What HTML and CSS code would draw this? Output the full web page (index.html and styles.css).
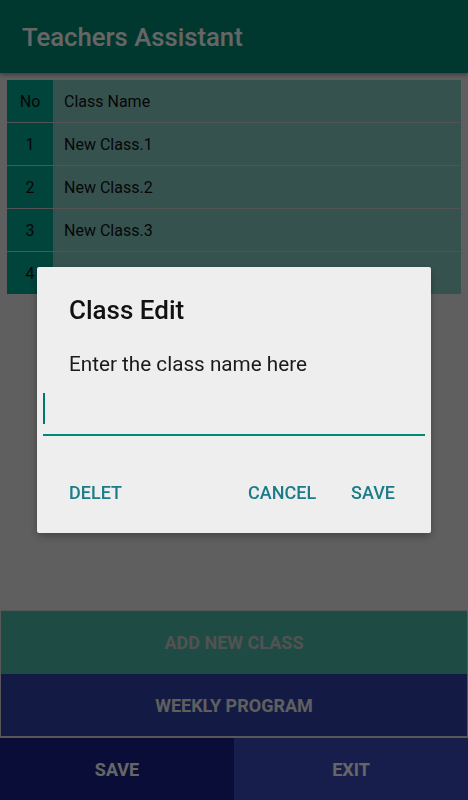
FILE: index.html
```html
<!DOCTYPE html>
<html lang="en">
<head>
  <meta charset="UTF-8">
  <title>Teachers Assistant</title>
  <meta name="viewport" content="width=device-width, initial-scale=1.0">
  <link rel="stylesheet" href="styles.css">
</head>
<body>

  <header class="app-bar">
    <h1>Teachers Assistant</h1>
  </header>

  <main class="content">
    <div class="class-table">
      <div class="row head">
        <div class="no">No</div>
        <div class="name">Class Name</div>
      </div>
      <div class="row">
        <div class="no">1</div>
        <div class="name">New Class.1</div>
      </div>
      <div class="row">
        <div class="no">2</div>
        <div class="name">New Class.2</div>
      </div>
      <div class="row">
        <div class="no">3</div>
        <div class="name">New Class.3</div>
      </div>
      <div class="row">
        <div class="no">4</div>
        <div class="name">New Class.4</div>
      </div>
    </div>
  </main>

  <footer class="actions">
    <div class="wide-buttons">
      <button class="btn add-btn">ADD NEW CLASS</button>
      <button class="btn weekly-btn">WEEKLY PROGRAM</button>
    </div>
    <div class="split-buttons">
      <button class="btn save-btn">SAVE</button>
      <button class="btn exit-btn">EXIT</button>
    </div>
  </footer>

  <!-- Class Edit Dialog -->
  <div class="scrim">
    <div class="dialog">
      <h2>Class Edit</h2>
      <p>Enter the class name here</p>
      <div class="field">
        <span class="cursor"></span>
      </div>
      <div class="dialog-buttons">
        <button class="text-btn">DELET</button>
        <span class="spacer"></span>
        <button class="text-btn">CANCEL</button>
        <button class="text-btn">SAVE</button>
      </div>
    </div>
  </div>

</body>
</html>
```

FILE: styles.css
```css
* {
  box-sizing: border-box;
}
body {
  font-family: Roboto, 'Noto Sans', sans-serif;
  margin: 0;
  padding: 0;
  height: 800px;
  background: #eeeeee;
  color: #111;
  display: flex;
  flex-direction: column;
  overflow: hidden;
}
.app-bar {
  background: #008c78;
  height: 73px;
  padding: 0 22px;
  display: flex;
  align-items: center;
  box-shadow: 0 2px 4px rgba(0,0,0,0.35);
  position: relative;
  z-index: 1;
}
.app-bar h1 {
  margin: 0;
  font-size: 25.7px;
  font-weight: 500;
  color: #ffffff;
}
.content {
  flex: 1;
  padding: 7px 7px 0;
}
.class-table {
  display: flex;
  flex-direction: column;
  gap: 1px;
  background: #cfcfcf;
}
.row {
  display: flex;
  height: 42px;
  font-size: 16px;
}
.row .no {
  width: 46px;
  background: #00aa96;
  display: flex;
  align-items: center;
  justify-content: center;
}
.row .name {
  flex: 1;
  background: #88cdc6;
  display: flex;
  align-items: center;
  padding-left: 11px;
}
.actions {
  display: flex;
  flex-direction: column;
}
.wide-buttons {
  display: flex;
  flex-direction: column;
  border: 1px solid #dddddd;
  border-bottom-width: 2px;
}
.btn {
  border: none;
  font-family: Roboto, sans-serif;
  font-weight: bold;
  font-size: 18px;
  color: #ffffff;
  cursor: pointer;
}
.add-btn {
  background: #4dbbab;
  height: 63px;
  color: #cccccc;
}
.weekly-btn {
  background: #3142ab;
  height: 62px;
  color: #eeeeee;
}
.split-buttons {
  display: flex;
  height: 62px;
}
.split-buttons .btn {
  flex: 1;
}
.save-btn {
  background: #1a228b;
}
.exit-btn {
  background: #3a4cbd;
}

/* Dialog */
.scrim {
  position: fixed;
  inset: 0;
  z-index: 10;
  background: rgba(0, 0, 0, 0.6);
  display: flex;
  align-items: center;
  justify-content: center;
}
.dialog {
  width: 394px;
  height: 266px;
  background: #eeeeee;
  border-radius: 2px;
  box-shadow: 0 3px 10px rgba(0,0,0,0.3);
  padding: 28px 6px 0;
}
.dialog h2 {
  margin: 0 0 0 26px;
  font-size: 26px;
  font-weight: 500;
  color: #111;
}
.dialog p {
  margin: 27px 0 0 26px;
  font-size: 20.7px;
  color: #1a1a1a;
}
.field {
  margin-top: 15px;
  height: 45px;
  border-bottom: 2px solid #00897b;
  padding-top: 2px;
}
.cursor {
  display: block;
  width: 2px;
  height: 31px;
  background: #00796b;
}
.dialog-buttons {
  display: flex;
  align-items: center;
  margin-top: 46px;
  padding: 0 30px 0 26px;
}
.spacer {
  flex: 1;
}
.text-btn {
  background: none;
  border: none;
  padding: 0;
  font-family: Roboto, sans-serif;
  font-weight: 500;
  font-size: 18px;
  color: #1b7b87;
  margin-left: 35px;
  cursor: pointer;
}
.text-btn:first-child {
  margin-left: 0;
}
```
